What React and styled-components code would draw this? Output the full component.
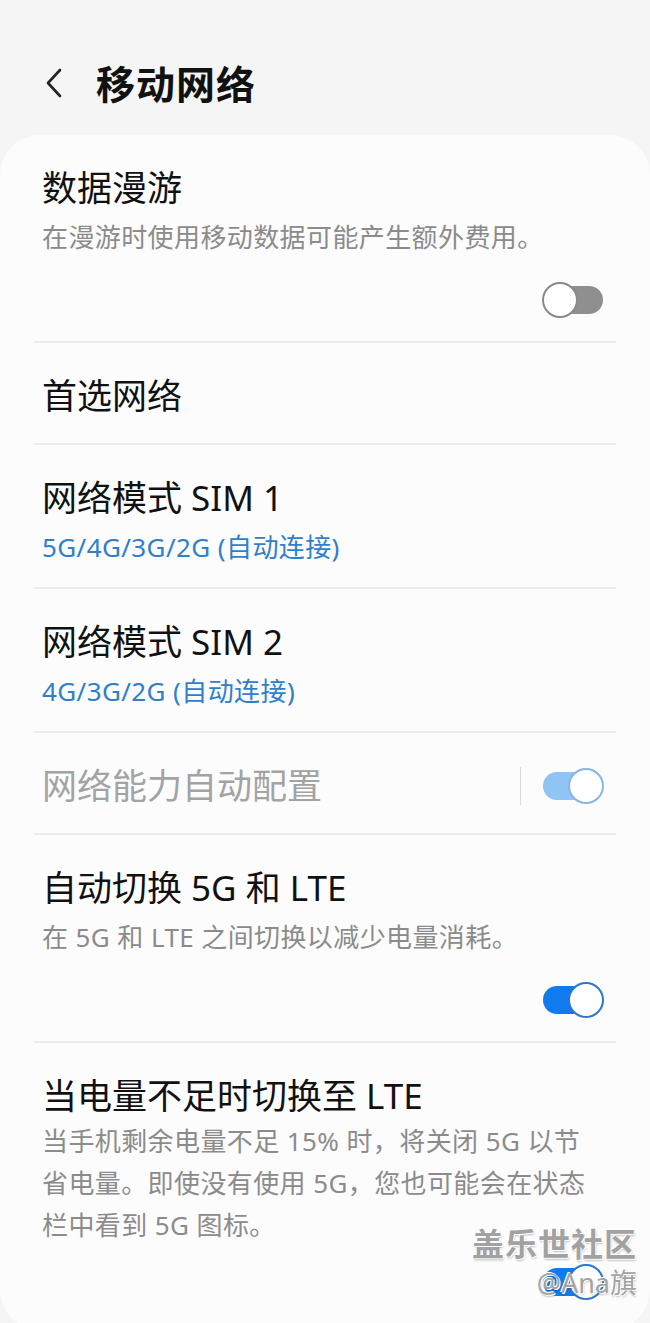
import styled, { createGlobalStyle } from "styled-components";

const Global = createGlobalStyle`
  html, body {
    margin: 0;
    padding: 0;
    background: #f5f5f5;
  }
  body {
    width: 650px;
    height: 1323px;
    overflow: hidden;
    font-family: "Noto Sans", "Noto Sans CJK SC", sans-serif;
  }
`;

const Page = styled.div`
  position: relative;
  width: 650px;
  background: #f5f5f5;
`;

const Header = styled.header`
  height: 135px;
  display: flex;
  align-items: center;
  padding: 32px 0 0 40px;
  box-sizing: border-box;
  gap: 26px;
  h1 {
    margin: 0;
    font-size: 39px;
    font-weight: 700;
    color: #111;
    letter-spacing: 1px;
    line-height: 1;
  }
`;

const BackBtn = styled.div`
  width: 30px;
  height: 36px;
  display: flex;
  align-items: center;
  justify-content: center;
  margin-top: -2px;
`;

const Card = styled.main`
  background: #fcfcfc;
  border-radius: 40px;
  padding: 0 34px;
`;

const Row = styled.section`
  padding: 29px 12px ${(p) => p.$pb}px 8px;
  border-bottom: ${(p) => (p.$last ? "none" : "2px solid #ececec")};
  display: flex;
  flex-direction: column;
`;

const Line = styled.div`
  display: flex;
  align-items: center;
  justify-content: space-between;
`;

const Title = styled.div`
  font-size: 35px;
  line-height: 48px;
  color: ${(p) => (p.$disabled ? "#a3a3a3" : "#111")};
`;

const Sub = styled.div`
  margin-top: ${(p) => (p.$tight ? 0 : 4)}px;
  font-size: 26px;
  letter-spacing: 0.4px;
  line-height: 42px;
  color: ${(p) => (p.$blue ? "#2f7fcb" : "#8b8b8b")};
`;

const ToggleRow = styled.div`
  display: flex;
  justify-content: flex-end;
  margin-top: ${(p) => p.$mt ?? 24}px;
`;

const SideGroup = styled.div`
  display: flex;
  align-items: center;
  gap: 21px;
`;

const VBar = styled.div`
  width: 1px;
  height: 38px;
  background: #dadada;
`;

const Track = styled.div`
  position: relative;
  width: 62px;
  height: 36px;
  display: flex;
  align-items: center;
  justify-content: ${(p) => (p.$on ? "flex-end" : "flex-start")};
  &::before {
    content: "";
    position: absolute;
    left: 1px;
    right: 1px;
    top: 4px;
    bottom: 4px;
    border-radius: 14px;
    background: ${(p) => (p.$on ? (p.$dim ? "#8fc4f5" : "#0f7bef") : "#8f8f8f")};
  }
`;

const Thumb = styled.div`
  position: relative;
  width: 36px;
  height: 36px;
  box-sizing: border-box;
  border-radius: 50%;
  background: #fff;
  border: 2px solid
    ${(p) => (p.$on ? (p.$dim ? "#88b6e4" : "#2f76cc") : "#8a8a8a")};
`;

const Watermark = styled.div`
  position: absolute;
  right: 13px;
  top: 1224px;
  display: flex;
  flex-direction: column;
  align-items: flex-end;
  color: #a2a2a2;
  text-shadow: 1px 1px 0 #fff, -1px -1px 0 #fff, 1px 2px 2px rgba(0, 0, 0, 0.25);
  pointer-events: none;
  .big {
    font-size: 32px;
    line-height: 40px;
    font-weight: 700;
    letter-spacing: 1px;
  }
  .small {
    font-size: 27px;
    line-height: 34px;
    margin-top: 2px;
  }
`;

const Toggle = ({ on, dim }) => (
  <Track $on={on} $dim={dim}>
    <Thumb $on={on} $dim={dim} />
  </Track>
);

export default function App() {
  return (
    <Page>
      <Global />
      <Header>
        <BackBtn>
          <svg width="20" height="32" viewBox="0 0 20 32">
            <polyline
              points="15,3 3,16 15,29"
              fill="none"
              stroke="#222"
              strokeWidth="2.6"
              strokeLinecap="round"
              strokeLinejoin="round"
            />
          </svg>
        </BackBtn>
        <h1>移动网络</h1>
      </Header>
      <Card>
        <Row $pb={23}>
          <Title>数据漫游</Title>
          <Sub>在漫游时使用移动数据可能产生额外费用。</Sub>
          <ToggleRow $mt={24}>
            <Toggle on={false} />
          </ToggleRow>
        </Row>
        <Row $pb={23}>
          <Title>首选网络</Title>
        </Row>
        <Row $pb={19}>
          <Title>网络模式 SIM 1</Title>
          <Sub $blue>5G/4G/3G/2G (自动连接)</Sub>
        </Row>
        <Row $pb={19}>
          <Title>网络模式 SIM 2</Title>
          <Sub $blue>4G/3G/2G (自动连接)</Sub>
        </Row>
        <Row $pb={23}>
          <Line>
            <Title $disabled>网络能力自动配置</Title>
            <SideGroup>
              <VBar />
              <Toggle on dim />
            </SideGroup>
          </Line>
        </Row>
        <Row $pb={23}>
          <Title>自动切换 5G 和 LTE</Title>
          <Sub>在 5G 和 LTE 之间切换以减少电量消耗。</Sub>
          <ToggleRow $mt={24}>
            <Toggle on />
          </ToggleRow>
        </Row>
        <Row $last $pb={30}>
          <Title>当电量不足时切换至 LTE</Title>
          <Sub $tight>
            当手机剩余电量不足 15% 时，将关闭 5G 以节省电量。即使没有使用 5G，您也可能会在状态栏中看到 5G 图标。
          </Sub>
          <ToggleRow $mt={18}>
            <Toggle on />
          </ToggleRow>
        </Row>
      </Card>
      <Watermark>
        <span className="big">盖乐世社区</span>
        <span className="small">@Ana旗</span>
      </Watermark>
    </Page>
  );
}
